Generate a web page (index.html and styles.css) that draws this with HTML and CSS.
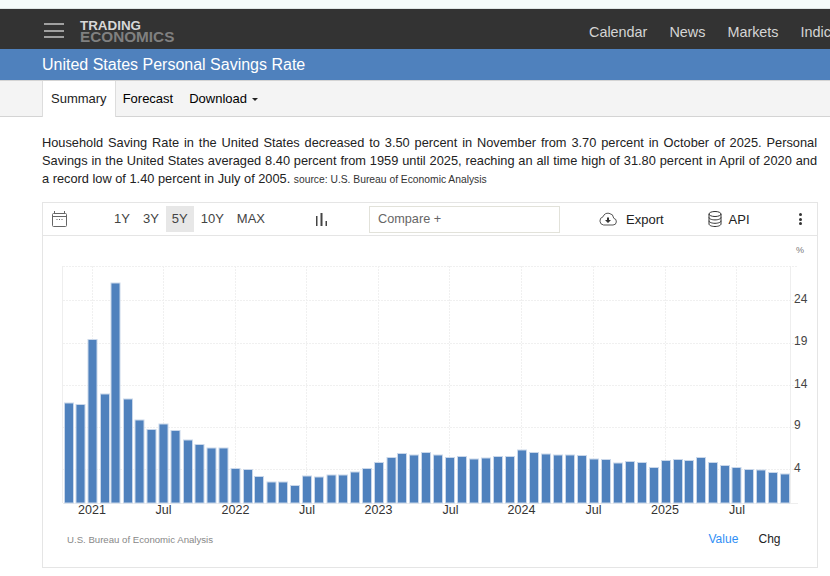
FILE: index.html
```html
<!DOCTYPE html>
<html lang="en">
<head>
<meta charset="utf-8">
<title>United States Personal Savings Rate</title>
<link rel="stylesheet" href="styles.css">
</head>
<body>
<div class="strip"></div>
<header class="topbar">
  <div class="brand">
    <div class="burger"><span></span><span></span><span></span></div>
    <div class="logo"><span class="logo-a">TRADING</span><span class="logo-b">ECONOMICS</span></div>
  </div>
  <nav class="mainnav"><a>Calendar</a><a>News</a><a>Markets</a><a>Indicators</a></nav>
</header>
<h1 class="titlebar">United States Personal Savings Rate</h1>
<div class="tabs">
  <a class="tab active">Summary</a>
  <a class="tab">Forecast</a>
  <a class="tab">Download<i class="caret"></i></a>
</div>
<p class="desc">Household Saving Rate in the United States decreased to 3.50 percent in November from 3.70 percent in October of 2025. Personal Savings in the United States averaged 8.40 percent from 1959 until 2025, reaching an all time high of 31.80 percent in April of 2020 and a record low of 1.40 percent in July of 2005. <small class="src">source: U.S. Bureau of Economic Analysis</small></p>
<section class="card">
  <div class="toolbar">
    <svg class="ico-cal" width="15" height="16" viewBox="0 0 15 16" fill="none" stroke="#666" stroke-width="1"><rect x="0.5" y="2.500" width="14" height="13" rx="1"/><path d="M0.500 5.500h14M2.500 0v2.500M12.500 0v2.500"/><path d="M4.500 8.500h1M7 8.500h1M9.500 8.500h1"/></svg>
    <div class="ranges"><a class="rng">1Y</a><a class="rng">3Y</a><a class="rng on">5Y</a><a class="rng">10Y</a><a class="rng">MAX</a></div>
    <svg class="ico-bars" width="11" height="13" viewBox="0 0 11 13" fill="#444"><rect x="0" y="3" width="1.500" height="10"/><rect x="4.500" y="0" width="2" height="13"/><rect x="9.500" y="8" width="1.500" height="5"/></svg>
    <div class="compare">Compare +</div>
    <a class="act export"><svg width="18" height="14" viewBox="0 0 18 14" fill="none" stroke="#444" stroke-width="0.900"><path d="M4.500 13h9.500a3.400 3.400 0 0 0 .8-6.700A5.600 5.600 0 0 0 4 4.800 4.200 4.200 0 0 0 4.500 13z"/><path d="M8 5.500h2v2.500h2l-3 3-3-3h2z" fill="#333" stroke="none"/></svg>Export</a>
    <a class="act api"><svg width="14" height="16" viewBox="0 0 14 16" fill="none" stroke="#333"><ellipse cx="7" cy="3" rx="6" ry="2.500"/><path d="M1 3v10c0 1.400 2.700 2.500 6 2.500s6-1.100 6-2.500V3M1 6.400c0 1.400 2.700 2.500 6 2.500s6-1.100 6-2.500M1 9.800c0 1.400 2.700 2.500 6 2.500s6-1.100 6-2.500"/></svg>API</a>
    <div class="kebab"><span></span><span></span><span></span></div>
  </div>
  <div class="plot">
    <svg class="chart" width="773" height="331" viewBox="43 236 773 331">
      <g class="grid">
        <path d="M63 266.500H798M63 300.500H798M63 343.500H798M63 385.500H798M63 427.500H798M63 469.500H798"/>
        <path d="M92.500 266V503M163.500 266V503M235.500 266V503M306.500 266V503M378.500 266V503M449.500 266V503M521.500 266V503M593.500 266V503M665.500 266V503M736.500 266V503"/>
      </g>
      <path class="axis" d="M62.500 266V503M790.500 266V503M63 503.500H798"/>
      <g class="bars">
        <rect x="64.500" y="403" width="9" height="100"/><rect x="76" y="404.500" width="9" height="98.500"/><rect x="88" y="339.500" width="9" height="163.500"/><rect x="100.500" y="394" width="9" height="109"/><rect x="111" y="283" width="9" height="220"/><rect x="123.500" y="399" width="9" height="104"/><rect x="135" y="420" width="9" height="83"/><rect x="147" y="429.500" width="9" height="73.500"/><rect x="159" y="424" width="9" height="79"/><rect x="171" y="430.500" width="9" height="72.500"/><rect x="183.500" y="440" width="9" height="63"/><rect x="195" y="444.500" width="9" height="58.500"/><rect x="207" y="448" width="9" height="55"/><rect x="219" y="448" width="9" height="55"/><rect x="231" y="468.500" width="9" height="34.500"/><rect x="243.500" y="469.500" width="9" height="33.500"/><rect x="254.500" y="476.500" width="9" height="26.500"/><rect x="267" y="482" width="9" height="21"/><rect x="278.500" y="482" width="9" height="21"/><rect x="290.500" y="485.500" width="9" height="17.500"/>
        <rect x="302.500" y="476" width="9" height="27"/><rect x="314.500" y="477" width="9" height="26"/><rect x="327" y="475" width="9" height="28"/><rect x="338.500" y="475" width="9" height="28"/><rect x="350.500" y="472" width="9" height="31"/><rect x="362.500" y="468.500" width="9" height="34.500"/><rect x="374.500" y="462.500" width="9" height="40.500"/><rect x="387" y="457.500" width="9" height="45.500"/><rect x="397.500" y="453.500" width="9" height="49.500"/><rect x="409.500" y="455" width="9" height="48"/><rect x="421.500" y="452.500" width="9" height="50.500"/><rect x="433.500" y="455" width="9" height="48"/><rect x="445.500" y="457.500" width="9" height="45.500"/><rect x="457.500" y="456.500" width="9" height="46.500"/><rect x="469.500" y="459" width="9" height="44"/><rect x="481.500" y="458" width="9" height="45"/><rect x="493.500" y="456.500" width="9" height="46.500"/><rect x="505.500" y="456.500" width="9" height="46.500"/><rect x="517.500" y="450" width="9" height="53"/><rect x="529.500" y="452.500" width="9" height="50.500"/><rect x="541.500" y="454" width="9" height="49"/>
        <rect x="553.500" y="455" width="9" height="48"/><rect x="565.500" y="455" width="9" height="48"/><rect x="577.500" y="455.500" width="9" height="47.500"/><rect x="589.500" y="459" width="9" height="44"/><rect x="601.500" y="459.500" width="9" height="43.500"/><rect x="613.500" y="463" width="9" height="40"/><rect x="625.500" y="461.500" width="9" height="41.500"/><rect x="637.500" y="462.500" width="9" height="40.500"/><rect x="649.500" y="467.500" width="9" height="35.500"/><rect x="661.500" y="460.500" width="9" height="42.500"/><rect x="673.500" y="459.500" width="9" height="43.500"/><rect x="684.500" y="460.500" width="9" height="42.500"/><rect x="696.500" y="457.500" width="9" height="45.500"/><rect x="708.500" y="462.500" width="9" height="40.500"/><rect x="720.500" y="465.500" width="9" height="37.500"/><rect x="732" y="467.500" width="9" height="35.500"/><rect x="744.500" y="469.500" width="9" height="33.500"/><rect x="756.500" y="470" width="9" height="33"/><rect x="768.500" y="472.500" width="9" height="30.500"/><rect x="780.500" y="474" width="9" height="29"/>
      </g>
      <g class="ylab"><text x="794" y="303">24</text><text x="794" y="345">19</text><text x="794" y="388">14</text><text x="794" y="429">9</text><text x="794" y="472">4</text></g>
      <text class="unit" x="796" y="253">%</text>
      <g class="xlab"><text x="92" y="514">2021</text><text x="163.500" y="514">Jul</text><text x="235.500" y="514">2022</text><text x="307" y="514">Jul</text><text x="378.500" y="514">2023</text><text x="450.500" y="514">Jul</text><text x="521.500" y="514">2024</text><text x="593.500" y="514">Jul</text><text x="665" y="514">2025</text><text x="737" y="514">Jul</text></g>
      <text class="credit" x="67" y="543">U.S. Bureau of Economic Analysis</text>
      <text class="val" x="708.500" y="543">Value</text>
      <text class="chg" x="758.500" y="543">Chg</text>
    </svg>
  </div>
</section>
</body>
</html>
```

FILE: styles.css
```css
* { box-sizing: border-box; }
html, body { margin: 0; padding: 0; }
body { width: 830px; height: 576px; overflow: hidden; background: #fff; font-family: "Liberation Sans", Arial, sans-serif; color: #111; }
.strip { height: 9px; background: #f5fbfa; border-bottom: 1px solid #dfe6e5; }
.topbar { height: 40px; background: #333; display: flex; align-items: center; padding-left: 44px; overflow: hidden; }
.brand { display: flex; align-items: center; gap: 16px; width: 545px; flex: none; }
.burger { display: flex; flex-direction: column; gap: 4.500px; width: 20px; margin-top: 3px; }
.burger span { height: 2px; background: #a0a0a0; }
.logo { display: flex; flex-direction: column; font-weight: 700; line-height: 11px; margin-top: 4px; }
.logo-a { color: #d8d8d8; font-size: 13.400px; }
.logo-b { color: #808080; font-size: 15.300px; }
.mainnav { display: flex; gap: 22px; font-size: 14.400px; color: #d5d5d5; padding-top: 6px; flex: none; }
.titlebar { margin: 0; height: 31px; background: #4f81bd; color: #fff; font-size: 16px; font-weight: 400; line-height: 31px; padding-left: 42px; }
.tabs { height: 37px; background: #f4f4f4; border-top: 1px solid #d4d4d4; border-bottom: 1px solid #d4d4d4; display: flex; padding-left: 42px; font-size: 13px; }
.tab { padding: 0 8px; line-height: 35px; color: #000; }
.tab.active { background: #fff; color: #222; border-left: 1px solid #ddd; border-right: 1px solid #ddd; height: 36px; margin-right: -1px; }
.caret { display: inline-block; width: 0; height: 0; margin-left: 5px; vertical-align: 2px; border-left: 3px solid transparent; border-right: 3px solid transparent; border-top: 3px solid #222; }
.desc { margin: 17px 13px 0 42px; font-size: 12.800px; line-height: 18px; text-align: justify; color: #222; height: 54px; }
.src { font-size: 10.300px; color: #333; }
.card { margin: 14px 0 0 42px; width: 776px; height: 366px; border: 1px solid #e5e5e5; }
.toolbar { height: 33px; border-bottom: 1px solid #e5e5e5; display: flex; align-items: center; }
.ico-cal { margin-left: 9px; flex: none; }
.ranges { display: flex; gap: 1px; margin-left: 41px; font-size: 13px; color: #444; }
.rng { padding: 0 6px; line-height: 26px; }
.rng.on { background: #e7e7e7; }
.ico-bars { margin-left: 45px; flex: none; }
.compare { margin-left: 42px; width: 191px; height: 27px; border: 1px solid #e2e2da; font-size: 12.700px; line-height: 25px; padding-left: 8px; color: #666; flex: none; }
.act { display: flex; align-items: center; font-size: 13px; color: #222; }
.export { margin-left: 39px; gap: 9px; }
.api { margin-left: 44px; gap: 7px; }
.kebab { margin-left: 49px; display: flex; flex-direction: column; gap: 1.500px; }
.kebab span { width: 3px; height: 3px; border-radius: 50%; background: #333; }
.plot { height: 331px; }
.chart { display: block; }
.grid path { stroke: #f0f0f0; stroke-width: 1; fill: none; stroke-dasharray: 2 1; }
.axis { stroke: #eee; fill: none; }
.bars rect { fill: #4f81bd; stroke: #c9d7ea; stroke-width: 1; }
.chart text { font-family: "Liberation Sans", Arial, sans-serif; }
.ylab text { font-size: 12px; fill: #444; }
.unit { font-size: 9px; fill: #777; }
.xlab text { font-size: 12.500px; fill: #333; text-anchor: middle; }
.credit { font-size: 9.650px; fill: #888; }
.val { font-size: 12px; fill: #2e8ef5; }
.chg { font-size: 12px; fill: #222; }
```
